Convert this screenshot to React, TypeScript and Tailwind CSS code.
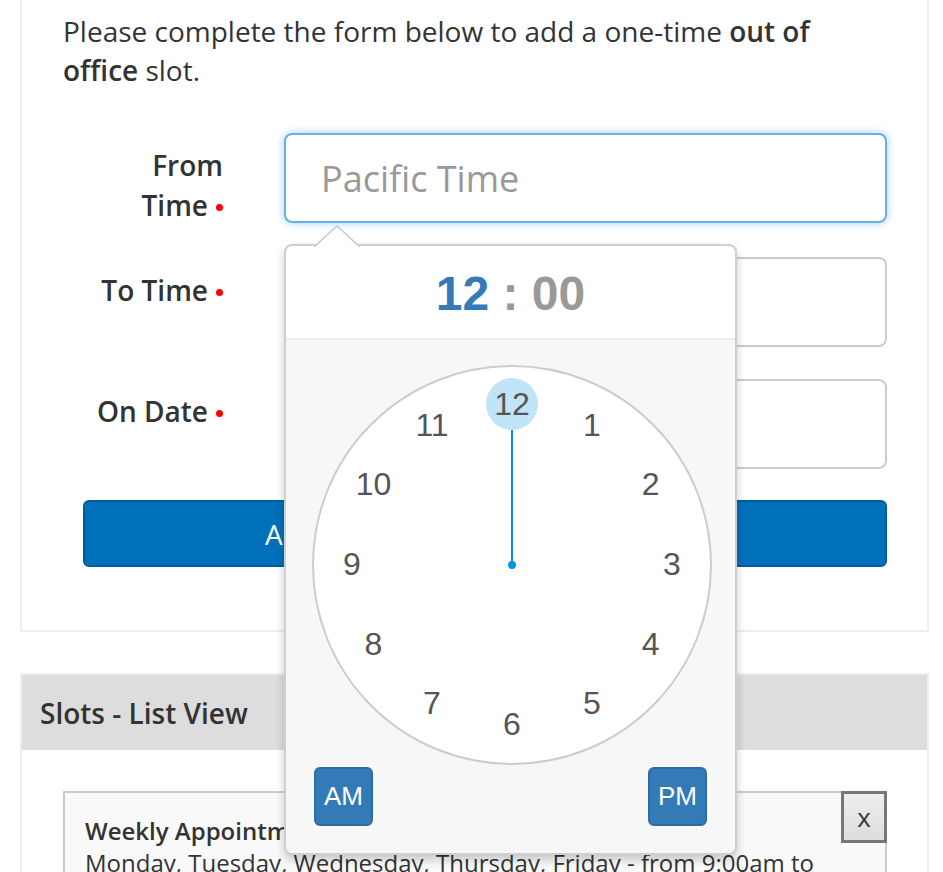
import React from 'react';

const hours = [12, 1, 2, 3, 4, 5, 6, 7, 8, 9, 10, 11];

const RequiredDot = () => (
  <span className="inline-block w-[7px] h-[7px] rounded-full bg-[#ff0000] ml-[8px] align-middle relative top-[-1px]"></span>
);

const ClockPicker: React.FC = () => {
  return (
    <div className="absolute left-[284px] top-[244px] w-[453px] h-[611px] z-20 rounded-[8px] border-2 border-[#cfcfcf] bg-[#f7f7f7] shadow-[0_5px_10px_rgba(0,0,0,0.2)]">
      {/* Arrow */}
      <svg className="absolute left-[28px] top-[-21px]" width="46" height="23" viewBox="0 0 46 23">
        <polygon points="0,22 23,1 46,22" fill="#ffffff" />
        <polyline points="0,22 23,1 46,22" fill="none" stroke="#c8c8c8" strokeWidth="1.5" />
      </svg>

      {/* Header */}
      <div className="h-[94px] pt-[4px] bg-white rounded-t-[7px] border-b-2 border-[#ececec] flex items-center justify-center text-[48px] font-bold font-['Liberation_Sans',Arial,sans-serif]">
        <span className="text-[#337ab7]">12</span>
        <span className="text-[#999999]">&nbsp;:&nbsp;</span>
        <span className="text-[#999999]">00</span>
      </div>

      {/* Dial */}
      <div className="relative mt-[25px] ml-[26px] w-[400px] h-[400px] rounded-full bg-white border-2 border-[#cccccc]">
        <svg className="absolute left-0 top-0" width="396" height="396" viewBox="0 0 396 396">
          <line x1="198" y1="198" x2="198" y2="40" stroke="#0095dd" strokeWidth="2" />
          <circle cx="198" cy="37" r="26" fill="#c0e5f7" />
          <circle cx="198" cy="198" r="4" fill="#0095dd" />
        </svg>
        {hours.map((h, i) => {
          const a = (i * 30 * Math.PI) / 180;
          const x = 198 + Math.sin(a) * 160;
          const y = 197 - Math.cos(a) * 160;
          return (
            <div
              key={h}
              className="absolute w-[52px] h-[52px] flex items-center justify-center text-[32px] text-[#555555] font-['Liberation_Sans',Arial,sans-serif]"
              style={{ left: x - 26, top: y - 26 }}
            >
              {h}
            </div>
          );
        })}
      </div>

      {/* AM / PM */}
      <div className="flex justify-between px-[28px] mt-[2px]">
        <button className="w-[59px] h-[59px] rounded-[6px] bg-[#337ab7] border-2 border-[#2e6da4] text-white text-[26px] font-['Liberation_Sans',Arial,sans-serif]">AM</button>
        <button className="w-[59px] h-[59px] rounded-[6px] bg-[#337ab7] border-2 border-[#2e6da4] text-white text-[26px] font-['Liberation_Sans',Arial,sans-serif]">PM</button>
      </div>
    </div>
  );
};

export default function App() {
  return (
    <div className="relative w-[943px] h-[872px] overflow-hidden bg-white text-[#333333] font-['Open_Sans','Lato',sans-serif]">
      {/* Form card */}
      <div className="ml-[20px] w-[909px] border-x-2 border-b-2 border-[#eeeeee] pt-[12px] pl-[41px] pr-[40px] pb-[63px]">
        <p className="text-[28px] leading-[39px]">
          Please complete the form below to add a one-time <b className="font-semibold">out of office</b> slot.
        </p>

        <div className="mt-[43px] pl-[20px]">
          <div className="flex mb-[32px]">
            <label className="w-[140px] pt-[12px] text-right text-[28px] leading-[40px] font-semibold">
              From <span className="whitespace-nowrap">Time<RequiredDot /></span>
            </label>
            <input
              placeholder="Pacific Time"
              className="ml-[61px] w-[603px] h-[90px] rounded-[8px] border-2 border-[#66afe9] shadow-[0_0_8px_rgba(102,175,233,0.6)] px-[35px] text-[36px] placeholder:text-[#999999] outline-none"
            />
          </div>
          <div className="flex mb-[32px]">
            <label className="w-[140px] pt-[13px] text-right text-[28px] leading-[40px] font-semibold whitespace-nowrap">
              To Time<RequiredDot />
            </label>
            <input className="ml-[61px] w-[603px] h-[90px] rounded-[8px] border-2 border-[#cccccc] px-[35px] text-[36px] outline-none" />
          </div>
          <div className="flex mb-[31px]">
            <label className="w-[140px] pt-[12px] text-right text-[28px] leading-[40px] font-semibold whitespace-nowrap">
              On Date<RequiredDot />
            </label>
            <input className="ml-[61px] w-[603px] h-[90px] rounded-[8px] border-2 border-[#cccccc] px-[35px] text-[36px] outline-none" />
          </div>
          <button className="w-[804px] h-[67px] rounded-[6px] bg-[#0070ba] border-2 border-[#005c9c] text-white text-[28px]">
            Add a One-Time Out of Office Slot
          </button>
        </div>
      </div>

      {/* Slots list card */}
      <div className="ml-[20px] mt-[41px] w-[909px] border-2 border-[#eeeeee]">
        <div className="h-[75px] bg-[#dddddd] flex items-center pl-[18px] text-[28px] font-semibold">
          Slots - List View
        </div>
        <div className="pl-[41px] pr-[40px] pt-[41px] pb-[30px]">
          <div className="relative border-2 border-[#cccccc] bg-[#f9f9f9] pl-[20px] pr-[60px] pt-[22px] pb-[16px]">
            <div className="text-[24px] leading-[32px] font-semibold">Weekly Appointment Slot</div>
            <div className="text-[24px] leading-[32px]">
              Monday, Tuesday, Wednesday, Thursday, Friday - from 9:00am to 5:00pm
            </div>
            <button className="absolute right-[-2px] top-[-2px] w-[46px] h-[52px] bg-[linear-gradient(#eeeeee,#dddddd)] border-[3px] border-[#777777] text-[26px] leading-none">
              x
            </button>
          </div>
        </div>
      </div>

      <ClockPicker />
    </div>
  );
}
